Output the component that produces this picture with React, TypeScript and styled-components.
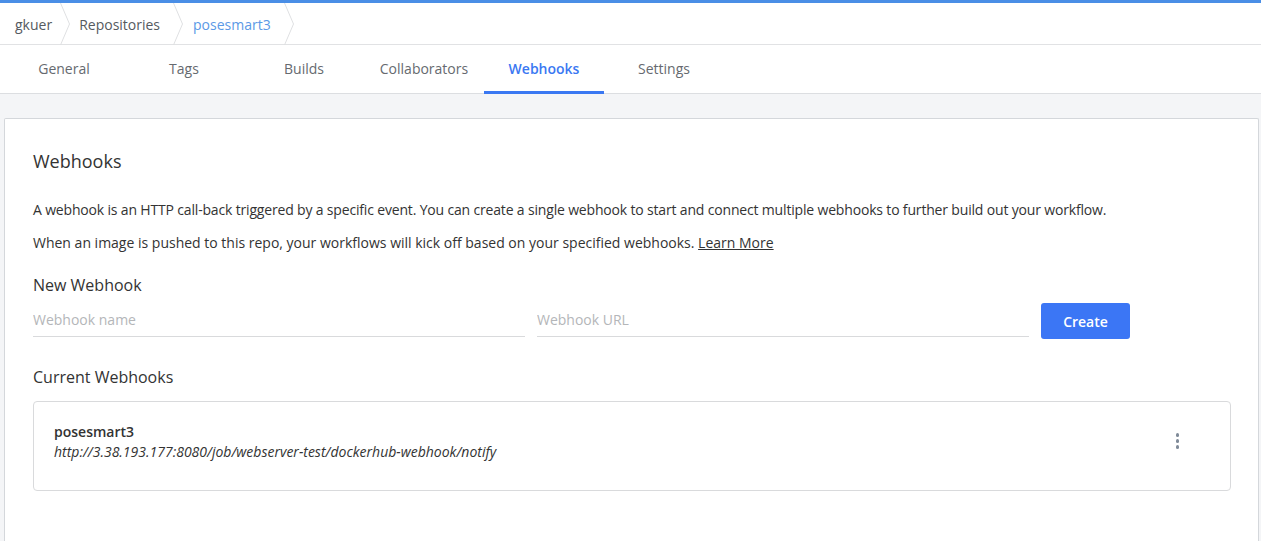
import React from "react";
import styled, { createGlobalStyle } from "styled-components";

const GlobalStyle = createGlobalStyle`
  html, body { margin: 0; padding: 0; background: #ffffff; }
  body { font-family: "Open Sans", "Noto Sans", sans-serif; color: #333; overflow: hidden; }
  * { box-sizing: border-box; }
`;

const Page = styled.div`
  display: flex;
  flex-direction: column;
  height: 541px;
  overflow: hidden;
`;

const Accent = styled.div`
  height: 3px;
  background: #4a8ee6;
  flex: none;
`;

const Breadcrumbs = styled.nav`
  display: flex;
  align-items: stretch;
  height: 42px;
  border-bottom: 1px solid #e1e2e4;
  flex: none;
`;

const Crumb = styled.div<{ $active?: boolean; $left: number; $right: number }>`
  display: flex;
  align-items: center;
  font-size: 14px;
  padding-top: 1px;
  color: ${(p) => (p.$active ? "#5b99e6" : "#555a60")};
  padding-left: ${(p) => p.$left}px;
  padding-right: ${(p) => p.$right}px;
`;

const Chevron = styled.svg`
  width: 10px;
  height: 42px;
  flex: none;
`;

const Tabs = styled.div`
  display: flex;
  height: 49px;
  padding-left: 4px;
  border-bottom: 1px solid #dcdee1;
  flex: none;
`;

const Tab = styled.div<{ $active?: boolean }>`
  width: 120px;
  display: flex;
  align-items: center;
  justify-content: center;
  font-size: 14px;
  padding-top: 1px;
  font-weight: ${(p) => (p.$active ? 600 : 400)};
  color: ${(p) => (p.$active ? "#3a78f2" : "#666a6f")};
  border-bottom: 3px solid ${(p) => (p.$active ? "#3a78f2" : "transparent")};
  margin-bottom: -1px;
`;

const Main = styled.main`
  flex: 1;
  background: #f4f5f7;
  padding: 24px 2px 0 4px;
  display: flex;
  flex-direction: column;
`;

const Card = styled.section`
  flex: 1;
  background: #fff;
  border: 1px solid #d4d7db;
  border-bottom: none;
  border-radius: 2px 2px 0 0;
  padding: 29px 27px 0 28px;
`;

const Title = styled.h1`
  margin: 0 0 26px;
  font-size: 18px;
  font-weight: 400;
  color: #333;
  line-height: 26px;
`;

const Para = styled.p<{ $tight?: boolean }>`
  margin: 0 0 13px;
  font-size: 14px;
  line-height: 20px;
  color: #333;
  letter-spacing: ${(p) => (p.$tight ? "-0.17px" : "0")};
`;

const LearnMore = styled.a`
  color: #333;
  text-decoration: underline;
`;

const SubTitle = styled.h2`
  margin: 0;
  font-size: 16px;
  font-weight: 400;
  color: #333;
  line-height: 22px;
`;

const NewTitle = styled(SubTitle)`
  margin-top: 21px;
`;

const FormRow = styled.div`
  display: flex;
  align-items: flex-start;
  gap: 12px;
  margin-top: 7px;
`;

const Field = styled.input`
  width: 492px;
  height: 34px;
  border: none;
  border-bottom: 1px solid #d9dadc;
  outline: none;
  font-family: inherit;
  font-size: 14px;
  color: #333;
  padding: 0;
  background: transparent;
  &::placeholder { color: #b4b6b9; }
`;

const Button = styled.button`
  width: 89px;
  height: 36px;
  border: none;
  border-radius: 3px;
  background: #3b76f5;
  color: #fff;
  font-family: inherit;
  font-size: 14px;
  font-weight: 600;
  flex: none;
`;

const Current = styled(SubTitle)`
  margin-top: 27px;
`;

const HookList = styled.div`
  margin-top: 13px;
  display: flex;
  flex-direction: column;
`;

const Hook = styled.div`
  border: 1px solid #d9dadc;
  border-radius: 4px;
  height: 90px;
  display: flex;
  align-items: center;
  padding: 0 51px 0 20px;
`;

const HookInfo = styled.div`
  flex: 1;
  display: flex;
  flex-direction: column;
  margin-top: -8px;
`;

const HookName = styled.div`
  font-size: 14px;
  font-weight: 600;
  color: #333;
  line-height: 20px;
`;

const HookUrl = styled.div`
  font-size: 14px;
  font-style: italic;
  color: #333;
  line-height: 20px;
`;

const Kebab = styled.div`
  display: flex;
  flex-direction: column;
  gap: 2.5px;
  margin-top: -10px;
`;

const Dot = styled.span`
  width: 3.5px;
  height: 3.5px;
  border-radius: 50%;
  background: #7f8a98;
`;

const ChevronIcon = () => (
  <Chevron viewBox="0 0 10 42">
    <polyline points="0.5,0 9.5,21 0.5,42" fill="none" stroke="#dfe0e2" strokeWidth="1" />
  </Chevron>
);

const tabs = ["General", "Tags", "Builds", "Collaborators", "Webhooks", "Settings"];

export default function App() {
  return (
    <Page>
      <GlobalStyle />
      <Accent />
      <Breadcrumbs>
        <Crumb $left={15} $right={8}>gkuer</Crumb>
        <ChevronIcon />
        <Crumb $left={9} $right={13}>Repositories</Crumb>
        <ChevronIcon />
        <Crumb $active $left={10} $right={13}>posesmart3</Crumb>
        <ChevronIcon />
      </Breadcrumbs>
      <Tabs>
        {tabs.map((t) => (
          <Tab key={t} $active={t === "Webhooks"}>{t}</Tab>
        ))}
      </Tabs>
      <Main>
        <Card>
          <Title>Webhooks</Title>
          <Para $tight>
            A webhook is an HTTP call-back triggered by a specific event. You can create a single webhook to start and connect multiple webhooks to further build out your workflow.
          </Para>
          <Para>
            When an image is pushed to this repo, your workflows will kick off based on your specified webhooks. <LearnMore>Learn More</LearnMore>
          </Para>
          <NewTitle>New Webhook</NewTitle>
          <FormRow>
            <Field placeholder="Webhook name" />
            <Field placeholder="Webhook URL" />
            <Button>Create</Button>
          </FormRow>
          <Current>Current Webhooks</Current>
          <HookList>
            <Hook>
              <HookInfo>
                <HookName>posesmart3</HookName>
                <HookUrl>http://3.38.193.177:8080/job/webserver-test/dockerhub-webhook/notify</HookUrl>
              </HookInfo>
              <Kebab>
                <Dot />
                <Dot />
                <Dot />
              </Kebab>
            </Hook>
          </HookList>
        </Card>
      </Main>
    </Page>
  );
}
